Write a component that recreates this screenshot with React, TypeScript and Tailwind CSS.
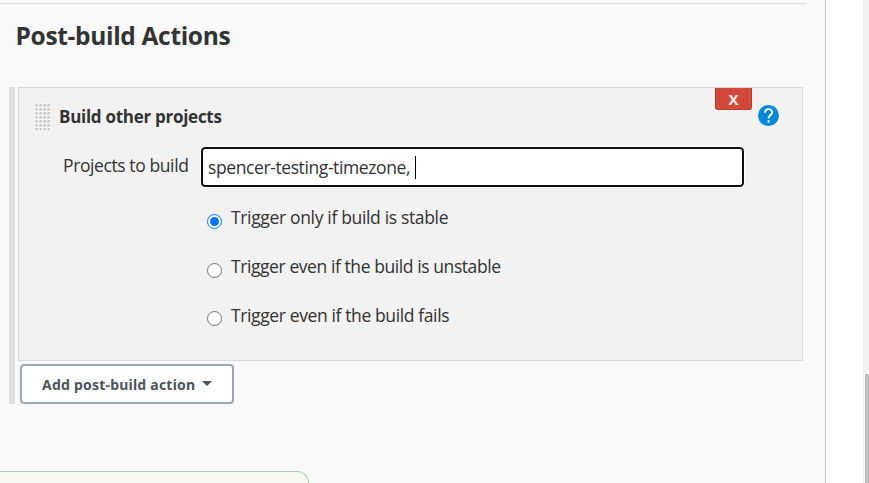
import React from "react";

const OPTIONS = [
  { label: "Trigger only if build is stable", spacing: "tracking-[-0.34px]", offset: "mt-[9px]", checked: true },
  { label: "Trigger even if the build is unstable", spacing: "tracking-[-0.42px]", offset: "mt-[9px]", checked: false },
  { label: "Trigger even if the build fails", spacing: "tracking-[-0.38px]", offset: "mt-[8px]", checked: false },
];

function DragHandle() {
  return (
    <svg className="mt-[15px] ml-[15px] h-[28px] w-4 shrink-0" viewBox="0 0 16 28" shapeRendering="crispEdges">
      <defs>
        <pattern id="grip" width="4" height="4" patternUnits="userSpaceOnUse">
          <rect width="4" height="4" fill="#f8f8f8" />
          <rect x="1" y="1" width="3" height="3" fill="#dededc" />
          <rect x="2" y="1" width="2" height="2" fill="#cfcfcc" />
          <rect x="2" y="2" width="1" height="1" fill="#c0c0bc" />
        </pattern>
      </defs>
      <rect width="16" height="27" fill="url(#grip)" />
    </svg>
  );
}

function HelpIcon() {
  return (
    <svg className="h-[21px] w-[21px]" viewBox="0 0 21 21">
      <circle cx="10.5" cy="10.5" r="10.5" fill="#068ad8" />
      <path d="M7.1 7.7 C7.1 2.9 14.2 3.1 14.2 7.3 C14.2 9.9 10.6 10.2 10.6 13.4" fill="none" stroke="#fff" strokeWidth="1.9" />
      <rect x="9.6" y="15.3" width="2" height="2.2" fill="#fff" />
    </svg>
  );
}

function Radio({ checked, offset }: { checked: boolean; offset: string }) {
  return (
    <span
      className={`${offset} flex h-[15px] w-[15px] shrink-0 items-center justify-center rounded-full bg-white ${
        checked ? "border-[1.5px] border-[#0075ff]" : "border border-[#767676]"
      }`}
    >
      {checked && <span className="h-[9px] w-[9px] rounded-full bg-[#0075ff]" />}
    </span>
  );
}

export default function App() {
  return (
    <div className="flex h-[483px] w-[869px] overflow-hidden bg-white font-['Open_Sans','Noto_Sans',sans-serif] text-[#333]">
      <main className="flex w-[826px] shrink-0 flex-col border-r border-[#c8c8c8] bg-[#f9f9f9]">
        <div className="mt-[3px] h-px w-[806px] shrink-0 bg-[#dcdcdc]" />
        <h1 className="ml-[15.5px] mt-[16px] h-[32px] whitespace-nowrap text-[24.5px] leading-[32px] font-bold tracking-[-0.33px]">
          <span>Post-build Actions</span>
        </h1>
        <div className="mt-[35px] ml-[9px] flex h-[317px] shrink-0">
          <div className="mr-[3px] w-[6px] bg-[#dfdfdf]" />
          <div className="flex flex-col">
            <section className="flex h-[274px] w-[785px] flex-col border border-[#d9d9d9] bg-[#f2f2f2]">
              <div className="flex h-[59px] shrink-0">
                <DragHandle />
                <h2 className="mt-[17px] ml-[9px] w-[656px] whitespace-nowrap text-[17px] leading-6 font-bold tracking-[-0.28px]">
                  <span>Build other projects</span>
                </h2>
                <button className="flex h-[22px] w-[37px] shrink-0 items-center justify-center rounded-b-[3px] border border-t-0 border-[#bd362f] bg-[#d24939] pt-px text-[15px] font-bold text-[#f7eeee]">
                  X
                </button>
                <div className="mt-[17px] ml-[6px]">
                  <HelpIcon />
                </div>
              </div>
              <div className="flex h-[40px] shrink-0">
                <label className="mt-[6px] ml-[44px] w-[138px] whitespace-nowrap text-[17.5px] leading-6 tracking-[-0.4px]">
                  <span>Projects to build</span>
                </label>
                <div className="flex h-10 w-[543px] items-center rounded-[4px] border-2 border-[#101010] bg-white pl-[5px] outline-1 outline-white">
                  <span className="whitespace-nowrap text-[17.5px] leading-6 tracking-[-0.4px]">spencer-testing-timezone,</span>
                  <span className="ml-[4.5px] h-[23px] w-px bg-black" />
                </div>
              </div>
              <div className="mt-[18px] ml-[188px] flex flex-col gap-[25px]">
                {OPTIONS.map((o) => (
                  <label key={o.label} className="flex h-6 gap-[9px]">
                    <Radio checked={o.checked} offset={o.offset} />
                    <span className={`whitespace-nowrap text-[17.5px] leading-6 ${o.spacing}`}>{o.label}</span>
                  </label>
                ))}
              </div>
            </section>
            <button className="mt-[3px] ml-[2px] flex h-10 w-[214px] items-center rounded-[4px] border-2 border-[#9aa8b3] bg-white pl-5 text-left font-['Noto_Sans',sans-serif] text-[14px] font-bold tracking-[0.22px] text-[#4d545d]">
              <span className="w-[154px] whitespace-nowrap">Add post-build action</span>
              <svg className="mb-[2px] ml-[6px] h-[5px] w-[10px]" viewBox="0 0 10 5">
                <path d="M0 0H10L5 5Z" fill="#4d545d" />
              </svg>
            </button>
          </div>
        </div>
        <div className="mt-[67px] h-[30px] w-[309px] shrink-0 rounded-tr-[12px] border-t border-r border-[#a9cdb8] bg-[#f7f8ef]" />
      </main>
      <aside className="ml-[37px] flex w-[6px] flex-col items-end bg-[#f1f1f1]">
        <div className="mt-[374px] h-[109px] w-1 bg-[#c1c1c1]" />
      </aside>
    </div>
  );
}
